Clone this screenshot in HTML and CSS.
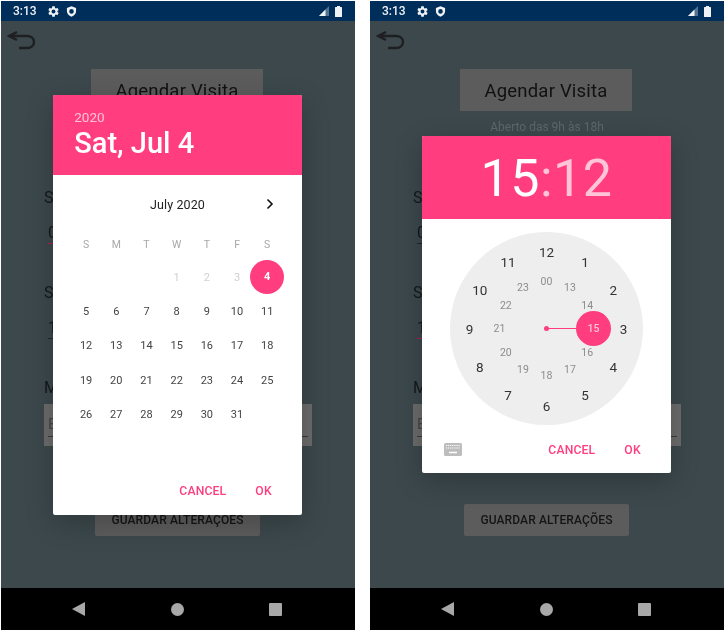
FILE: index.html
```html
<!DOCTYPE html>
<html lang="pt">
<head>
<meta charset="utf-8">
<title>Agendar Visita</title>
<link rel="stylesheet" href="styles.css">
</head>
<body>
<svg class="defs" aria-hidden="true">
  <symbol id="gear" viewBox="0 0 24 24"><path d="M19.14 12.94c.04-.3.06-.61.06-.94 0-.32-.02-.64-.07-.94l2.03-1.58c.18-.14.23-.41.12-.61l-1.92-3.32c-.12-.22-.37-.29-.59-.22l-2.39.96c-.5-.38-1.03-.7-1.62-.94l-.36-2.54c-.04-.24-.24-.41-.48-.41h-3.84c-.24 0-.43.17-.47.41l-.36 2.54c-.59.24-1.13.57-1.62.94l-2.39-.96c-.22-.08-.47 0-.59.22L2.74 8.87c-.12.21-.08.47.12.61l2.03 1.58c-.05.3-.09.63-.09.94s.02.64.07.94l-2.03 1.58c-.18.14-.23.41-.12.61l1.92 3.32c.12.22.37.29.59.22l2.39-.96c.5.38 1.03.7 1.62.94l.36 2.54c.05.24.24.41.48.41h3.84c.24 0 .44-.17.47-.41l.36-2.54c.59-.24 1.13-.56 1.62-.94l2.39.96c.22.08.47 0 .59-.22l1.92-3.32c.12-.22.07-.47-.12-.61l-2.01-1.58zM12 15.6c-1.98 0-3.6-1.62-3.6-3.6s1.62-3.6 3.6-3.6 3.6 1.62 3.6 3.6-1.62 3.6-3.6 3.6z"/></symbol>
  <symbol id="shield" viewBox="0 0 12 12"><path fill-rule="evenodd" d="M6 .3 11 2.1v3.4c0 3-2.1 5.3-5 6.2-2.9-.9-5-3.2-5-6.2V2.1zM6 3.4A2.5 2.5 0 1 0 6 8.4 2.5 2.5 0 1 0 6 3.4z"/></symbol>
  <symbol id="signal" viewBox="0 0 10 10"><path d="M10 0V10H0z" opacity=".35"/><path d="M6.5 3.5V10H0z"/></symbol>
  <symbol id="battery" viewBox="0 0 7 11"><path d="M2 0h3v1h1.4c.3 0 .6.3.6.6v8.8c0 .3-.3.6-.6.6H.6c-.3 0-.6-.3-.6-.6V1.600c0-.3.3-.6.6-.6H2z"/></symbol>
  <symbol id="back" viewBox="0 0 30 22"><path d="M10 3 2 7l8 4M2 7h18c4 0 7 2.500 7 6s-3 6-7 6h-8" fill="none" stroke="currentColor" stroke-width="2.400"/></symbol>
  <symbol id="tri" viewBox="0 0 14 14"><path d="M13 0V14L0 7z"/></symbol>
</svg>

<section class="phone">
  <header class="status">
    <span class="time">3:13</span>
    <svg class="ico-gear"><use href="#gear"/></svg>
    <svg class="ico-shield"><use href="#shield"/></svg>
    <span class="spacer"></span>
    <svg class="ico-signal"><use href="#signal"/></svg>
    <svg class="ico-battery"><use href="#battery"/></svg>
  </header>
  <main class="screen">
    <svg class="ico-back"><use href="#back"/></svg>
    <h1 class="title">Agendar Visita</h1>
    <p class="hours"></p>
    <div class="form">
      <label class="label">S</label>
      <div class="input active">0</div>
      <label class="label second">S</label>
      <div class="input">1</div>
      <label class="label third">M</label>
      <div class="textbox"><span>E</span></div>
    </div>
    <button class="save">GUARDAR ALTERAÇÕES</button>

    <div class="overlay">
      <div class="dialog date">
        <div class="date-head">
          <div class="year">2020</div>
          <div class="day">Sat, Jul 4</div>
        </div>
        <div class="month-row">
          <span class="month">July 2020</span>
          <svg class="chev" viewBox="0 0 10 12"><path d="M2.500 1.500 7 6l-4.500 4.500" fill="none" stroke="currentColor" stroke-width="1.600"/></svg>
        </div>
        <div class="cal">
          <span class="wd">S</span><span class="wd">M</span><span class="wd">T</span><span class="wd">W</span><span class="wd">T</span><span class="wd">F</span><span class="wd">S</span>
          <span></span><span></span><span></span><span class="off">1</span><span class="off">2</span><span class="off">3</span><span class="sel">4</span>
          <span>5</span><span>6</span><span>7</span><span>8</span><span>9</span><span>10</span><span>11</span>
          <span>12</span><span>13</span><span>14</span><span>15</span><span>16</span><span>17</span><span>18</span>
          <span>19</span><span>20</span><span>21</span><span>22</span><span>23</span><span>24</span><span>25</span>
          <span>26</span><span>27</span><span>28</span><span>29</span><span>30</span><span>31</span>
        </div>
        <div class="actions date-actions">
          <span class="btn">CANCEL</span><span class="btn">OK</span>
        </div>
      </div>
    </div>
  </main>
  <nav class="nav">
    <svg class="nav-tri"><use href="#tri"/></svg>
    <span class="nav-dot"></span>
    <span class="nav-sq"></span>
  </nav>
</section>

<section class="phone">
  <header class="status">
    <span class="time">3:13</span>
    <svg class="ico-gear"><use href="#gear"/></svg>
    <svg class="ico-shield"><use href="#shield"/></svg>
    <span class="spacer"></span>
    <svg class="ico-signal"><use href="#signal"/></svg>
    <svg class="ico-battery"><use href="#battery"/></svg>
  </header>
  <main class="screen">
    <svg class="ico-back"><use href="#back"/></svg>
    <h1 class="title">Agendar Visita</h1>
    <p class="hours">Aberto das 9h às 18h</p>
    <div class="form">
      <label class="label">S</label>
      <div class="input">0</div>
      <label class="label second">S</label>
      <div class="input active">1</div>
      <label class="label third">M</label>
      <div class="textbox"><span>E</span></div>
    </div>
    <button class="save">GUARDAR ALTERAÇÕES</button>

    <div class="overlay">
      <div class="dialog clock">
        <div class="clock-head"><span class="hh">15</span><span class="mm">:12</span></div>
        <svg class="face" viewBox="0 0 193 193">
          <circle class="face-bg" cx="96.500" cy="96.500" r="96.500"/>
          <g class="outer">
            <text x="96.500" y="19.500">12</text><text x="135" y="29.800">1</text><text x="163.200" y="58">2</text><text x="173.500" y="96.500">3</text>
            <text x="163.200" y="135">4</text><text x="135" y="163.200">5</text><text x="96.500" y="173.500">6</text><text x="58" y="163.200">7</text>
            <text x="29.800" y="135">8</text><text x="19.500" y="96.500">9</text><text x="29.800" y="58">10</text><text x="58" y="29.800">11</text>
          </g>
          <g class="inner">
            <text x="96.500" y="49.500">00</text><text x="120" y="55.800">13</text><text x="137.200" y="73">14</text>
            <text x="137.200" y="120">16</text><text x="120" y="137.200">17</text><text x="96.500" y="143.500">18</text>
            <text x="73" y="137.200">19</text><text x="55.800" y="120">20</text><text x="49.500" y="96.500">21</text>
            <text x="55.800" y="73">22</text><text x="73" y="55.800">23</text>
          </g>
          <line class="hand" x1="96.500" y1="96.500" x2="130" y2="96.500"/>
          <circle class="pin" cx="96.500" cy="96.500" r="2.500"/>
          <circle class="pin" cx="143.500" cy="96.500" r="17.500"/>
          <text class="inner-sel" x="143.500" y="96.500">15</text>
        </svg>
        <div class="actions clock-actions">
          <svg class="kbd" viewBox="0 0 18 13">
            <rect width="18" height="13" rx="1.500" fill="#bdbdbd"/>
            <path d="M2 2.500h14M2 5h14" stroke="#fff" stroke-width="1.100" stroke-dasharray="1.100 .8"/>
            <path d="M5 9.500h8" stroke="#fff" stroke-width="1.300"/>
          </svg>
          <span class="spacer"></span>
          <span class="btn">CANCEL</span><span class="btn">OK</span>
        </div>
      </div>
    </div>
  </main>
  <nav class="nav">
    <svg class="nav-tri"><use href="#tri"/></svg>
    <span class="nav-dot"></span>
    <span class="nav-sq"></span>
  </nav>
</section>
</body>
</html>
```
FILE: styles.css
```css
* { box-sizing: border-box; }
html, body { height: 100%; }
body {
  margin: 0;
  padding: 1px 0 0 1px;
  display: flex;
  gap: 15px;
  background: #fff;
  font-family: Roboto, "Liberation Sans", sans-serif;
}
.defs { display: none; }
.phone {
  width: 354px;
  height: 629px;
  display: flex;
  flex-direction: column;
  overflow: hidden;
  filter: blur(.4px);
}
.spacer { flex: 1; }

/* status bar */
.status {
  height: 20px;
  flex: none;
  background: #002e5a;
  color: #f0f3f6;
  display: flex;
  align-items: center;
  padding: 0 13px 0 12px;
}
.time { font-size: 12px; font-weight: 500; width: 34px; }
.status svg { fill: currentColor; }
.ico-gear { width: 13px; height: 13px; }
.ico-shield { width: 11px; height: 11px; margin-left: 6px; }
.ico-signal { width: 10px; height: 10px; margin-right: 6px; }
.ico-battery { width: 7px; height: 11px; }

/* underlying screen */
.screen {
  flex: 1;
  position: relative;
  background: #3c484c;
  display: flex;
  flex-direction: column;
}
.ico-back { width: 30px; height: 22px; margin: 8px 0 0 6px; color: #1d1f20; flex: none; }
.title {
  width: 172px;
  height: 42px;
  margin: 18px 0 0 90px;
  background: #5c5c5c;
  color: #111;
  font-size: 18.500px;
  font-weight: 400;
  line-height: 45px;
  text-align: center;
  letter-spacing: .2px;
}
.hours {
  height: 16px;
  margin: 8px 0 0;
  font-size: 12px;
  line-height: 16px;
  color: #5d686b;
  text-align: center;
}
.form {
  margin: 53px 0 0 43px;
  width: 268px;
  color: #14181a;
}
.label { display: block; font-size: 16px; line-height: 20px; height: 20px; }
.label.second { margin-top: 39px; }
.label.third { margin-top: 39px; }
.input {
  margin: 16px 0 0 4px;
  width: 254px;
  height: 20px;
  font-size: 16px;
  line-height: 18px;
  border-bottom: 1px solid #20282b;
}
.input.active { border-bottom: 1.500px solid #b01f50; }
.textbox {
  margin-top: 6px;
  height: 42px;
  background: #6b6b6b;
  padding: 11px 4px 0;
  color: #454545;
  font-size: 15px;
  line-height: 18px;
}
.textbox span {
  display: block;
  height: 22px;
  border-bottom: 1px solid #3a3a3a;
}
.save {
  display: block;
  width: 165px;
  height: 32px;
  margin: 58px 0 0 94px;
  padding: 0;
  border: 0;
  border-radius: 2px;
  background: #5c5c5c;
  color: #141414;
  font-family: inherit;
  font-size: 12px;
  font-weight: 500;
  letter-spacing: .1px;
}

/* dialogs */
.overlay {
  position: absolute;
  inset: 0;
  padding-right: 1px;
  display: flex;
  align-items: center;
  justify-content: center;
}
.dialog {
  width: 248.500px;
  background: #fff;
  border-radius: 2px;
  overflow: hidden;
  box-shadow: 0 8px 28px rgba(0, 0, 0, .22);
  display: flex;
  flex-direction: column;
}
.date { height: 420px; }
.clock { height: 337px; }
.date-head {
  height: 80px;
  background: #ff3d7f;
  padding: 14px 0 0 21px;
  color: #fff;
}
.year { font-size: 13.500px; line-height: 16px; color: #ffc4d8; }
.day { font-size: 29px; font-weight: 500; line-height: 32px; margin-top: 2px; }
.month-row {
  height: 58px;
  padding-top: 20px;
  position: relative;
  text-align: center;
  font-size: 12.500px;
  line-height: 20px;
  color: #222;
}
.month { letter-spacing: .1px; }
.chev {
  position: absolute;
  right: 27px;
  top: 23px;
  width: 10px;
  height: 12px;
  color: #111;
}
.cal {
  display: grid;
  grid-template-columns: repeat(7, 30.200px);
  grid-auto-rows: 34.400px;
  padding-left: 17.750px;
  margin-top: -7px;
  font-size: 11px;
  color: #444;
}
.cal span {
  display: flex;
  align-items: center;
  justify-content: center;
}
.cal .wd { color: #a8a8a8; font-size: 10.500px; padding-top: 4px; }
.cal .off { color: #d0d0d0; }
.cal .sel {
  width: 34px;
  height: 34px;
  border-radius: 50%;
  background: #ff3d7f;
  color: #fff;
  font-weight: 700;
  justify-self: center;
}
.actions {
  display: flex;
  color: #ff3d7f;
  font-size: 12.200px;
  font-weight: 500;
}
.btn { letter-spacing: .15px; }
.btn + .btn { margin-left: 29px; }
.date-actions { justify-content: flex-end; margin-top: auto; padding: 0 30px 17px 0; }

/* clock */
.clock-head {
  height: 83px;
  background: #ff3d7f;
  color: #fff;
  text-align: center;
  font-size: 52px;
  line-height: 86px;
  font-weight: 400;
  letter-spacing: .5px;
}
.mm { color: #ffc4d8; }
.face {
  display: block;
  width: 193px;
  height: 193px;
  margin: 13px auto 0;
  font-family: Roboto, "Liberation Sans", sans-serif;
}
.face-bg { fill: #eeeeee; }
.face text { text-anchor: middle; dominant-baseline: central; }
.outer { font-size: 13.500px; fill: #333; }
.inner { font-size: 10.500px; fill: #8c8c8c; }
.hand { stroke: #ff3d7f; stroke-width: 1.200; }
.pin { fill: #ff3d7f; }
.inner-sel { font-size: 10.500px; fill: #ffc4d8; font-weight: 500; }
.clock-actions { align-items: center; padding: 0 30px 0 22px; height: 48px; }
.clock-actions .btn { padding-top: 2px; }
.kbd { width: 18px; height: 13px; }

/* nav bar */
.nav {
  height: 42px;
  flex: none;
  background: #000;
  display: grid;
  grid-template-columns: 152px 46px 70px 1fr;
  align-items: center;
}
.nav-tri { width: 14px; height: 14px; fill: #a8a8a8; margin-left: 71px; }
.nav-dot { width: 13px; height: 13px; border-radius: 50%; background: #a8a8a8; margin-left: 18px; }
.nav-sq { width: 13px; height: 13px; border-radius: 1px; background: #a8a8a8; margin-left: 70px; }
```
